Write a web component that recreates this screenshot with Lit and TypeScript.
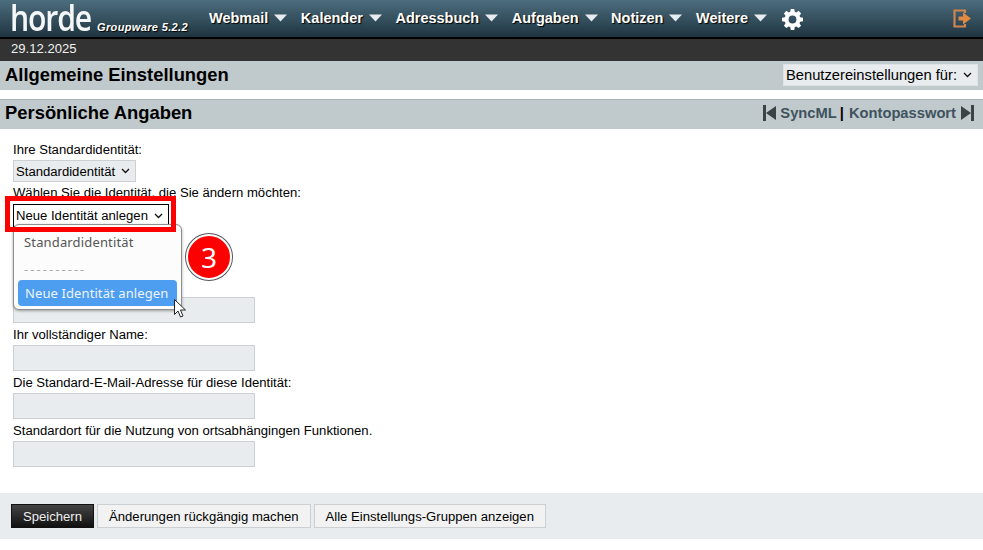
import { LitElement, html, css, svg } from "lit";
import { customElement } from "lit/decorators.js";

const menus = ["Webmail", "Kalender", "Adressbuch", "Aufgaben", "Notizen", "Weitere"];

const gear = svg`<path fill="#fff" fill-rule="evenodd" d="M9 0h4l.6 3.200 1.700.7L18 2.100l2.800 2.900-1.800 2.600.7 1.700L23 10v4l-3.300.6-.7 1.700 1.800 2.700-2.800 2.800-2.700-1.800-1.700.7L13 24H9l-.6-3.300-1.700-.7-2.700 1.800L1.200 19 3 16.300l-.7-1.700L-1 14v-4l3.300-.6.7-1.700L1.200 5 4 2.100l2.700 1.800 1.700-.7L9 0zm2 7.500a4.500 4.500 0 1 0 0 9 4.500 4.500 0 0 0 0-9z"/>`;

@customElement("app-root")
export class AppRoot extends LitElement {
  static styles = css`
    :host { display: block; position: relative; width: 983px; height: 550px; background: #fff; overflow: hidden;
      font-family: "Liberation Sans", Arial, sans-serif; font-size: 13.12px; color: #000; }
    .top { height: 37px; border-bottom: 2px solid #000; background: linear-gradient(#4c6d7e, #1f3440); display: flex; align-items: flex-start; }
    .logo { margin: 0 -10px 0 10px; width: 97px; height: 37px; font-family: "Open Sans", sans-serif; font-size: 36px; line-height: 35px; letter-spacing: -1.4px; color: #f4f6f7; font-weight: 600; filter: blur(.6px); transform: scaleX(.84); transform-origin: left top; }
    .ver { margin: 21px 0 0 0; width: 112px; font-size: 11px; line-height: 13px; font-style: italic; font-weight: bold; color: #fff; text-shadow: 1px 1px 1px #000; letter-spacing: .36px; white-space: nowrap; }
    .menu { display: flex; font-size: 14.5px; font-weight: bold; color: #fff; text-shadow: 1px 1px 1px #000; line-height: 16px; padding-top: 10px; }
    .menu span { display: flex; align-items: center; margin-right: 13.5px; }
    .menu svg { margin-left: 6px; }
    .gear { margin: 9px 0 0 1px; }
    .exit { margin: 9px 11px 0 auto; }
    .date { height: 22px; background: #333; color: #f0f0f0; padding-left: 11px; line-height: 19px; }
    .bar { background: #c0c9cc; display: flex; justify-content: space-between; align-items: center; padding: 0 5px; box-sizing: border-box; }
    .bar1 { height: 29px; padding-bottom: 2px; }
    .bar2 { height: 30px; margin-top: 9px; border-top: 1px solid #a9b2b5; padding-bottom: 3px; }
    h1 { margin: 0; font-size: 18.4px; font-weight: bold; line-height: 22px; color: #000; }
    .sel { display: inline-flex; align-items: center; box-sizing: border-box; background: #e9ecef; border: 1px solid #ccd0d3; padding: 0 5px 0 2px; height: 22px; color: #000; }
    .sel svg { margin-left: 6px; }
    .user { font-size: 14.72px; border-color: #dfe3e6; }
    .links { display: flex; align-items: center; font-size: 14.72px; font-weight: bold; color: #3f535e; padding-right: 4px; }
    .links i { font-style: normal; color: #000; margin: 0 5px 0 3px; }
    .links svg { margin: 0 4px 0 0; }
    .links svg.r { margin: 0 0 0 5px; }
    form { display: block; padding: 13px 13px 0; height: 364px; box-sizing: border-box; }
    label { display: block; line-height: 15px; }
    .first { margin-bottom: 3px; }
    .second { margin-top: 3px; margin-bottom: 4px; }
    .sel.open { background: #fff; border: 1px solid #000; height: 23px; }
    .input { width: 242px; height: 26px; box-sizing: border-box; background: #e9ecef; border: 1px solid #ccd0d3; }
    .gap { margin-top: 70px; }
    .f { margin-top: 4px; margin-bottom: 3px; }
    .foot { height: 46px; background: #e9ecef; padding: 11px 11px 0; box-sizing: border-box; display: flex; gap: 3px; align-items: flex-start; }
    .btn { height: 24px; box-sizing: border-box; border: 1px solid #ccd0d3; background: #f2f2f2; padding: 0 11px; line-height: 24px; color: #000; }
    .primary { background: linear-gradient(#444, #111); border-color: #111; color: #eee; }
    .pop { position: absolute; left: 13px; top: 224px; width: 169px; height: 86px; box-sizing: border-box; background: #fcfcfc; border: 1px solid #8f8f8f; border-radius: 6px; box-shadow: 0 1px 3px rgba(0,0,0,.35); font-family: "Noto Sans", sans-serif; font-size: 13px; color: #555; padding: 4px; }
    .opt { height: 25px; line-height: 26px; padding-left: 6px; letter-spacing: .15px; }
    .opt.dash { height: 26px; line-height: 30px; color: #aaa; letter-spacing: 2.05px; }
    .opt.act { height: 26px; background: #4d9df0; color: #eef5fc; border-radius: 4px; line-height: 27px; padding-left: 7px; letter-spacing: .1px; }
    .hl { position: absolute; left: 5px; top: 196px; width: 171px; height: 36px; box-sizing: border-box; border: 5px solid #f00; pointer-events: none; }
    .badge { position: absolute; left: 186px; top: 234px; width: 46px; height: 46px; box-sizing: border-box; border-radius: 50%; background: #f00; border: 2px solid #fff; color: #fff; font-family: "Noto Sans", sans-serif; font-size: 28px; line-height: 42px; text-align: center; box-shadow: 0 0 0 1px #555; }
    .cursor { position: absolute; left: 174px; top: 299px; }
  `;

  private caret() {
    return html`<svg width="13" height="8" viewBox="0 0 13 8"><path d="M0 .5h13L6.500 7.500z" fill="#e6ecef"/></svg>`;
  }

  private chev() {
    return html`<svg width="9" height="6" viewBox="0 0 9 6"><path d="M1 1l3.500 3.500L8 1" fill="none" stroke="#111" stroke-width="1.300"/></svg>`;
  }

  render() {
    return html`
      <div class="top">
        <div class="logo">horde</div>
        <div class="ver">Groupware 5.2.2</div>
        <div class="menu">${menus.map((m) => html`<span>${m}${this.caret()}</span>`)}</div>
        <svg class="gear" width="21" height="21" viewBox="-1 0 24 24">${gear}</svg>
        <svg class="exit" width="19" height="19" viewBox="0 0 19 19">
          <path d="M12 4V1.500H1.500v16H12V15" fill="none" stroke="#cf8550" stroke-width="2.200"/>
          <path d="M5.500 7.500H10V3.500L18 9.500l-8 6v-4H5.500z" fill="#e08a42"/>
        </svg>
      </div>
      <div class="date">29.12.2025</div>
      <div class="bar bar1">
        <h1>Allgemeine Einstellungen</h1>
        <div class="sel user">Benutzereinstellungen für:${this.chev()}</div>
      </div>
      <div class="bar bar2">
        <h1>Persönliche Angaben</h1>
        <div class="links">
          <svg width="13" height="16" viewBox="0 0 13 16"><path d="M0 0h3v16H0zM13 1v14L3 8z" fill="#3c4347"/></svg>
          SyncML<i>|</i>Kontopasswort
          <svg class="r" width="13" height="16" viewBox="0 0 13 16"><path d="M13 0h-3v16h3zM0 1v14l10-7z" fill="#3c4347"/></svg>
        </div>
      </div>
      <form>
        <label class="first">Ihre Standardidentität:</label>
        <div class="sel">Standardidentität${this.chev()}</div>
        <label class="second">Wählen Sie die Identität, die Sie ändern möchten:</label>
        <div class="sel open">Neue Identität anlegen${this.chev()}</div>
        <div class="input gap"></div>
        <label class="f">Ihr vollständiger Name:</label>
        <div class="input"></div>
        <label class="f">Die Standard-E-Mail-Adresse für diese Identität:</label>
        <div class="input"></div>
        <label class="f">Standardort für die Nutzung von ortsabhängingen Funktionen.</label>
        <div class="input"></div>
      </form>
      <div class="foot">
        <div class="btn primary">Speichern</div>
        <div class="btn">Änderungen rückgängig machen</div>
        <div class="btn">Alle Einstellungs-Gruppen anzeigen</div>
      </div>
      <div class="pop">
        <div class="opt">Standardidentität</div>
        <div class="opt dash">----------</div>
        <div class="opt act">Neue Identität anlegen</div>
      </div>
      <div class="hl"></div>
      <div class="badge">3</div>
      <svg class="cursor" width="14" height="20" viewBox="0 0 14 20"><path d="M.500.500v15l3.500-3.500 2.500 6 2.500-1-2.500-6h5z" fill="#fff" stroke="#222"/></svg>
    `;
  }
}
